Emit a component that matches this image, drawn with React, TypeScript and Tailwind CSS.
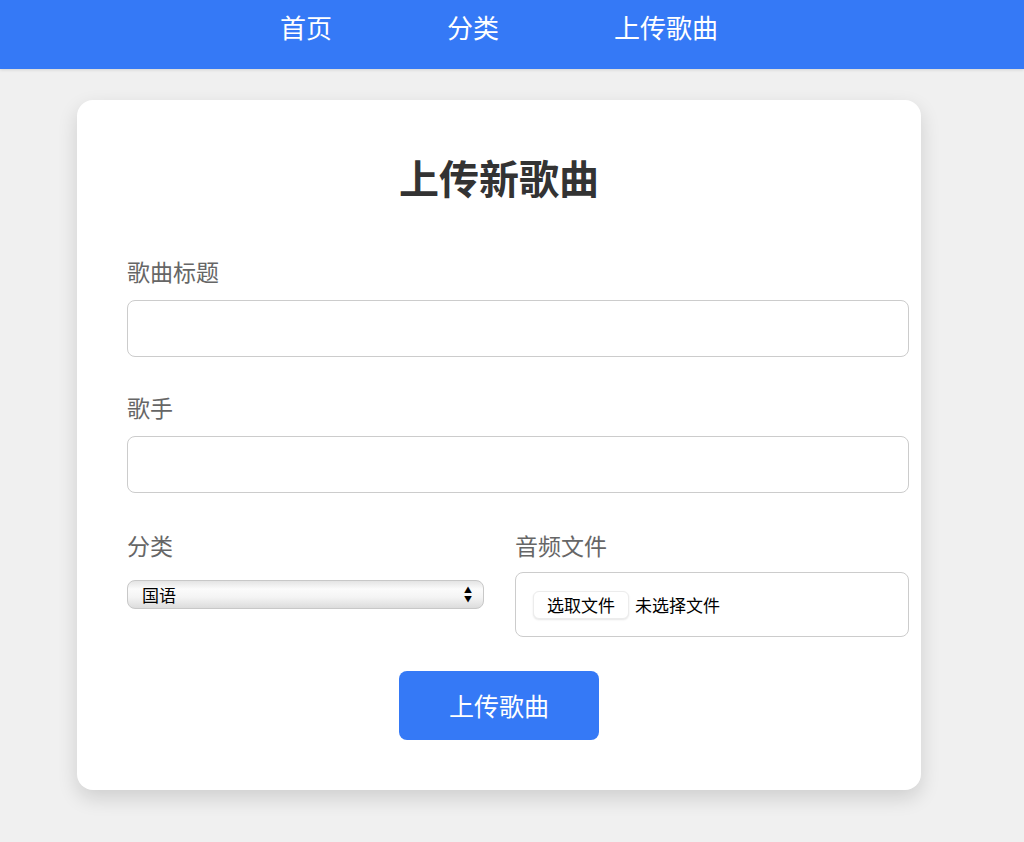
import { useState } from 'react';

const font = { fontFamily: '"Noto Sans CJK SC", "Noto Sans", sans-serif' };

export default function App() {
  const [title, setTitle] = useState("");
  const [artist, setArtist] = useState("");
  const [category, setCategory] = useState("国语");

  return (
    <div className="min-h-[842px] bg-[#f0f0f0]" style={font}>
      {/* 顶部导航 */}
      <header className="h-[69px] bg-[#3579f6] shadow-[0_1px_3px_rgba(0,0,0,0.12)]">
        <nav className="flex h-full w-[998px] items-start justify-center gap-[115px] pt-[8px] text-[26px] text-white">
          <a className="leading-[38px]">首页</a>
          <a className="leading-[38px]">分类</a>
          <a className="leading-[38px]">上传歌曲</a>
        </nav>
      </header>

      <div className="w-[998px] pt-[31px]">
        <div className="mx-auto w-[844px] rounded-[16px] bg-white px-[50px] pb-[50px] pt-[49px] shadow-[0_8px_20px_rgba(0,0,0,0.14)]">
          <h1 className="text-center text-[40px] font-bold leading-[56px] text-[#333]">上传新歌曲</h1>

          {/* 歌曲标题 */}
          <div className="mt-[50px]">
            <label className="block text-[23px] leading-[32px] text-[#666]">歌曲标题</label>
            <input
              type="text"
              value={title}
              onChange={(e) => setTitle(e.target.value)}
              className="mt-[13px] block h-[57px] w-[782px] rounded-[8px] border border-[#ccc] bg-white px-3 outline-none"
            />
          </div>

          {/* 歌手 */}
          <div className="mt-[34px]">
            <label className="block text-[23px] leading-[32px] text-[#666]">歌手</label>
            <input
              type="text"
              value={artist}
              onChange={(e) => setArtist(e.target.value)}
              className="mt-[13px] block h-[57px] w-[782px] rounded-[8px] border border-[#ccc] bg-white px-3 outline-none"
            />
          </div>

          {/* 分类 + 音频文件 */}
          <div className="mt-[36px] flex gap-[31px]">
            <div className="w-[357px]">
              <label className="block text-[23px] leading-[32px] text-[#666]">分类</label>
              <div className="relative mt-[19px]">
                <select
                  value={category}
                  onChange={(e) => setCategory(e.target.value)}
                  className="block h-[29px] w-[357px] appearance-none rounded-[8px] border border-[#c8c8c8] bg-[linear-gradient(#e4e4e4,#fbfbfb_30%,#f4f4f4_60%,#dcdcdc)] pl-[14px] text-[17px] text-black outline-none"
                >
                  <option>国语</option>
                  <option>粤语</option>
                  <option>欧美</option>
                  <option>日韩</option>
                </select>
                <span className="pointer-events-none absolute right-[12px] top-[5px] flex flex-col items-center text-[8px] leading-[9px] text-black">
                  <span>▲</span>
                  <span>▼</span>
                </span>
              </div>
            </div>

            <div className="flex-1">
              <label className="block text-[23px] leading-[32px] text-[#666]">音频文件</label>
              <div className="mt-[11px] flex h-[65px] w-[394px] items-center rounded-[8px] border border-[#ccc] pl-[17px]">
                <button className="h-[28px] rounded-[6px] border border-[#ececec] bg-white px-[13px] text-[17px] text-black shadow-[0_1px_2px_rgba(0,0,0,0.1)]">
                  选取文件
                </button>
                <span className="ml-[6px] text-[17px] text-black">未选择文件</span>
              </div>
            </div>
          </div>

          <div className="mt-[34px] flex justify-center">
            <button className="h-[69px] w-[200px] rounded-[8px] bg-[#3579f6] text-[25px] text-white">
              上传歌曲
            </button>
          </div>
        </div>
      </div>
    </div>
  );
}
